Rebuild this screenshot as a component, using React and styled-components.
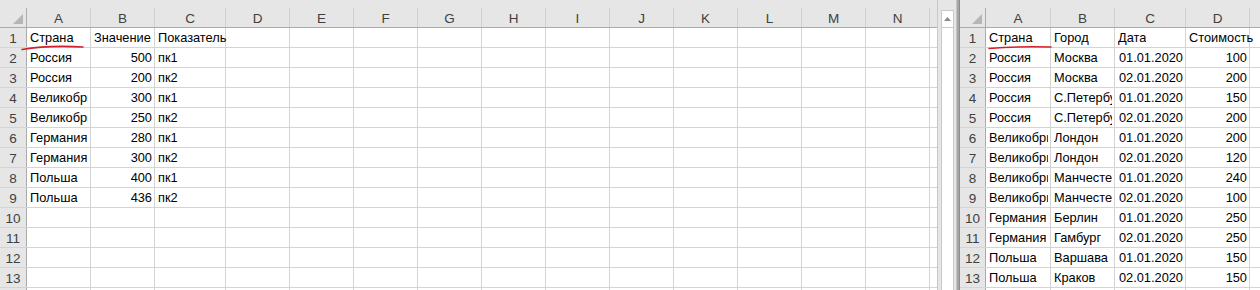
import React from "react";
import styled, { createGlobalStyle } from "styled-components";

const GlobalStyle = createGlobalStyle`
  html, body {
    margin: 0;
    padding: 0;
    overflow: hidden;
    background: #e6e6e6;
  }
  * {
    box-sizing: border-box;
  }
`;

const leftSheet = {
  rowHead: 27,
  cols: [
    { name: "A", w: 64 },
    { name: "B", w: 64 },
    { name: "C", w: 71 },
    ..."DEFGHIJKLMN".split("").map((name) => ({ name, w: 64 })),
    { name: "O", w: 64 },
  ],
  rows: [
    ["Страна", "Значение", "Показатель"],
    ["Россия", 500, "пк1"],
    ["Россия", 200, "пк2"],
    ["Великобритания", 300, "пк1"],
    ["Великобритания", 250, "пк2"],
    ["Германия", 280, "пк1"],
    ["Германия", 300, "пк2"],
    ["Польша", 400, "пк1"],
    ["Польша", 436, "пк2"],
  ],
};

const rightSheet = {
  rowHead: 26,
  cols: [
    { name: "A", w: 65 },
    { name: "B", w: 64 },
    { name: "C", w: 71 },
    { name: "D", w: 64 },
    { name: "E", w: 64 },
  ],
  rows: [
    ["Страна", "Город", "Дата", "Стоимость"],
    ["Россия", "Москва", "01.01.2020", 100],
    ["Россия", "Москва", "02.01.2020", 200],
    ["Россия", "С.Петербург", "01.01.2020", 150],
    ["Россия", "С.Петербург", "02.01.2020", 200],
    ["Великобритания", "Лондон", "01.01.2020", 200],
    ["Великобритания", "Лондон", "02.01.2020", 120],
    ["Великобритания", "Манчестер", "01.01.2020", 240],
    ["Великобритания", "Манчестер", "02.01.2020", 100],
    ["Германия", "Берлин", "01.01.2020", 250],
    ["Германия", "Гамбург", "02.01.2020", 250],
    ["Польша", "Варшава", "01.01.2020", 150],
    ["Польша", "Краков", "02.01.2020", 150],
  ],
};

const ROW_COUNT = 14;

const Screen = styled.div`
  position: relative;
  display: flex;
  width: 1260px;
  height: 290px;
  overflow: hidden;
  background: #e6e6e6;
  font-family: "Liberation Sans", Arial, sans-serif;
`;

const Pane = styled.div`
  display: flex;
  flex: ${({ grow }) => (grow ? 1 : "none")};
  width: ${({ w }) => (w ? w + "px" : "auto")};
  min-width: 0;
  height: 100%;
`;

const Grid = styled.div`
  display: flex;
  flex-direction: column;
  width: ${({ w }) => (w ? w + "px" : "auto")};
  flex: ${({ w }) => (w ? "none" : 1)};
  min-width: 0;
  height: 100%;
  overflow: hidden;
`;

const TopStrip = styled.div`
  height: 8px;
  flex: none;
  background: #e6e6e6;
`;

const Row = styled.div`
  display: flex;
  flex: none;
  height: 20px;
  background: ${({ head }) => (head ? "#e6e6e6" : "#fff")};
  border-bottom: 1px solid ${({ head }) => (head ? "#ababab" : "#d4d4d4")};
`;

const RowHead = styled.div`
  flex: none;
  width: ${({ w }) => w}px;
  height: 100%;
  display: flex;
  align-items: center;
  justify-content: center;
  background: #e6e6e6;
  border-right: 1px solid #ababab;
  color: #3f3f3f;
  font-size: 13.5px;
  padding-top: 1px;
`;

const Corner = styled(RowHead)`
  align-items: flex-end;
  justify-content: flex-end;
  padding: 0 3px 3px 0;
`;

const CornerMark = styled.div`
  width: 10px;
  height: 10px;
  background: #b6b6b6;
  clip-path: polygon(100% 0, 100% 100%, 0 100%);
`;

const ColHead = styled.div`
  flex: none;
  width: ${({ w }) => w}px;
  height: 100%;
  display: flex;
  align-items: center;
  justify-content: center;
  border-right: 1px solid #d0d0d0;
  color: #3f3f3f;
  font-size: 13.5px;
  padding-top: 1px;
`;

const Cell = styled.div`
  position: relative;
  flex: none;
  width: ${({ w }) => w}px;
  height: 100%;
  display: flex;
  align-items: flex-end;
  justify-content: ${({ num }) => (num ? "flex-end" : "flex-start")};
  padding: 0 2px 2px 3px;
  border-right: 1px solid #d4d4d4;
  overflow: ${({ clip }) => (clip ? "hidden" : "visible")};
  white-space: nowrap;
  font-size: 12.8px;
  line-height: 15px;
  color: #000;
`;

const CellText = styled.span`
  position: relative;
  z-index: 1;
  min-width: 0;
  overflow: ${({ clip }) => (clip ? "hidden" : "visible")};
`;

const ScrollColumn = styled.div`
  flex: none;
  width: 18px;
  height: 100%;
  padding: 10px 1px 0 3px;
  background: #e6e6e6;
  border-left: 1px solid #c8c8c8;
`;

const ScrollTrack = styled.div`
  height: 100%;
  background: #fff;
  border: 1px solid #c8c8c8;
  border-bottom: none;
`;

const ScrollButton = styled.div`
  height: 17px;
  display: flex;
  align-items: center;
  justify-content: center;
  border-bottom: 1px solid #c8c8c8;
`;

const ArrowUp = styled.div`
  width: 7px;
  height: 4px;
  background: #8a8a8a;
  clip-path: polygon(50% 0, 100% 100%, 0 100%);
`;

const Splitter = styled.div`
  flex: none;
  width: 4px;
  height: 100%;
  background: #a6a6a6;
  border-left: 1px solid #c4c4c4;
  border-right: 1px solid #8c8c8c;
`;

const Annotations = styled.svg`
  position: absolute;
  left: 0;
  top: 0;
  pointer-events: none;
  z-index: 5;
`;

const isNum = (v) => typeof v === "number" || /^\d\d\.\d\d\.\d{4}$/.test(v);

function Sheet({ sheet, width }) {
  const { rowHead, cols, rows } = sheet;
  return (
    <Grid w={width}>
      <TopStrip />
      <Row head>
        <Corner w={rowHead}>
          <CornerMark />
        </Corner>
        {cols.map((c) => (
          <ColHead key={c.name} w={c.w}>
            {c.name}
          </ColHead>
        ))}
      </Row>
      {Array.from({ length: ROW_COUNT }, (_, r) => {
        const data = rows[r] || [];
        return (
          <Row key={r}>
            <RowHead w={rowHead}>{r + 1}</RowHead>
            {cols.map((c, i) => {
              const v = data[i];
              const next = data[i + 1];
              const clip = next !== undefined && next !== "";
              return (
                <Cell
                  key={c.name}
                  w={c.w}
                  num={v !== undefined && isNum(v)}
                  clip={clip}
                >
                  {v !== undefined && <CellText clip={clip}>{v}</CellText>}
                </Cell>
              );
            })}
          </Row>
        );
      })}
    </Grid>
  );
}

export default function App() {
  return (
    <>
      <GlobalStyle />
      <Screen>
        <Pane w={956}>
          <Sheet sheet={leftSheet} width={937} />
          <ScrollColumn>
            <ScrollTrack>
              <ScrollButton>
                <ArrowUp />
              </ScrollButton>
            </ScrollTrack>
          </ScrollColumn>
        </Pane>
        <Splitter />
        <Pane grow>
          <Sheet sheet={rightSheet} />
        </Pane>
        <Annotations width="1260" height="290" viewBox="0 0 1260 290">
          <path
            d="M22 49.5 Q 48 45 83 47"
            fill="none"
            stroke="#d4202a"
            strokeWidth="1.6"
            strokeLinecap="round"
          />
          <path
            d="M989 48.5 Q 1020 46 1051 47"
            fill="none"
            stroke="#d4202a"
            strokeWidth="1.6"
            strokeLinecap="round"
          />
        </Annotations>
      </Screen>
    </>
  );
}
